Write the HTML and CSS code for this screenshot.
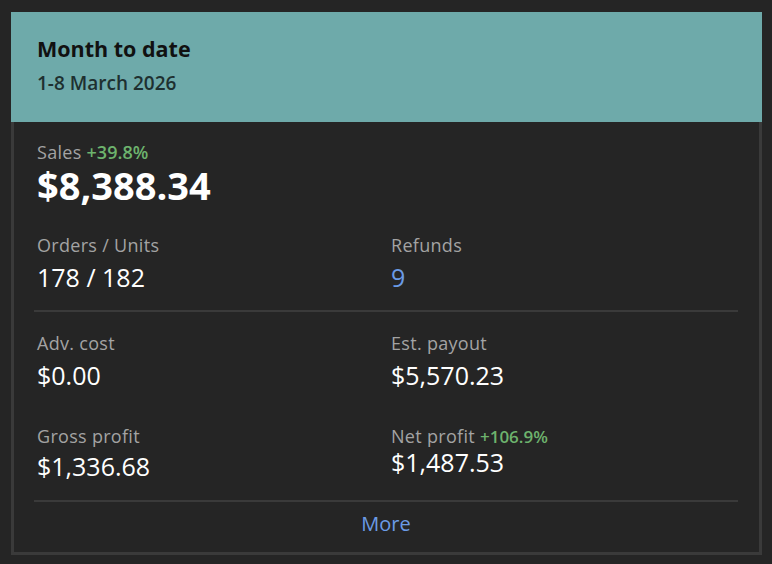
FILE: index.html
```html
<!DOCTYPE html>
<html>
<head>
<meta charset="utf-8">
<link rel="stylesheet" href="styles.css">
</head>
<body>
<div class="card">
  <div class="header">
    <div class="title">Month to date</div>
    <div class="date">1-8 March 2026</div>
  </div>
  <div class="body">
    <div class="sales">
      <div class="label">Sales <span class="pct">+39.8%</span></div>
      <div class="big">$8,388.34</div>
    </div>
    <div class="grid first">
      <div class="item">
        <div class="label">Orders / Units</div>
        <div class="value">178 / 182</div>
      </div>
      <div class="item">
        <div class="label">Refunds</div>
        <div class="value link">9</div>
      </div>
    </div>
    <div class="divider"></div>
    <div class="grid second">
      <div class="item">
        <div class="label">Adv. cost</div>
        <div class="value">$0.00</div>
      </div>
      <div class="item">
        <div class="label">Est. payout</div>
        <div class="value">$5,570.23</div>
      </div>
      <div class="item lower">
        <div class="label">Gross profit</div>
        <div class="value">$1,336.68</div>
      </div>
      <div class="item lower tight">
        <div class="label">Net profit <span class="pct">+106.9%</span></div>
        <div class="value">$1,487.53</div>
      </div>
    </div>
    <div class="divider"></div>
    <div class="more">More</div>
  </div>
</div>
</body>
</html>
```
FILE: styles.css
```css
html, body {
  margin: 0;
  padding: 0;
  background: #252525;
}
body {
  font-family: "Open Sans", "Noto Sans", sans-serif;
  padding: 12px 0 0 11px;
}
.card {
  width: 751px;
}
.header {
  background: #6eaaaa;
  height: 110px;
  box-sizing: border-box;
  padding: 23px 26px 0;
}
.title {
  font-size: 21.5px;
  font-weight: 700;
  color: #111;
  line-height: 28px;
}
.date {
  font-size: 19px;
  font-weight: 600;
  color: #1e3030;
  line-height: 26px;
  margin-top: 7px;
}
.body {
  border: 3px solid #3a3a3a;
  border-top: none;
  padding: 0 21px 15px 20px;
}
.sales {
  padding: 18px 3px 0;
}
.label {
  font-size: 18px;
  color: #a3a3a3;
  line-height: 24px;
  letter-spacing: 0.3px;
}
.pct {
  color: #6db36d;
  font-size: 18px;
  font-weight: 600;
  letter-spacing: 0;
}
.tight .pct {
  font-size: 17px;
}
.big {
  font-size: 38px;
  font-weight: 700;
  color: #fff;
  line-height: 40px;
  margin-top: 1px;
}
.grid {
  display: grid;
  grid-template-columns: 354px 1fr;
}
.first {
  padding: 28px 0 17px;
}
.second {
  padding: 19px 0 18px;
  row-gap: 33px;
}
.item {
  padding: 0 3px;
}
.value {
  font-size: 25px;
  color: #fff;
  line-height: 32px;
  margin-top: 4px;
}
.lower .value {
  margin-top: 2px;
}
.tight .value {
  margin-top: -3px;
}
.link {
  color: #6b9be6;
}
.divider {
  height: 2px;
  background: #3a3a3a;
}
.more {
  text-align: center;
  color: #6b9be6;
  font-size: 20px;
  line-height: 26px;
  padding-top: 9px;
}
```
